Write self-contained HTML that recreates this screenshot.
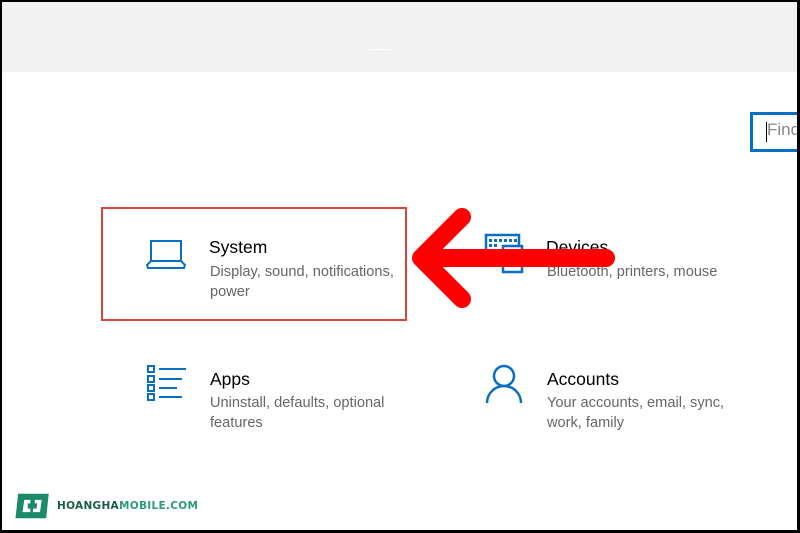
<!DOCTYPE html>
<html><head><meta charset="utf-8"><style>
*{margin:0;padding:0;box-sizing:border-box}
body{width:800px;height:533px;position:relative;overflow:hidden;background:#fff;font-family:"Segoe UI","Liberation Sans",sans-serif}
.frame{position:absolute;left:0;top:0;width:800px;height:533px;border:2px solid #000;border-right-width:3px;border-bottom-width:3px;pointer-events:none}
.top{position:absolute;left:0;top:0;width:800px;height:72px;background:#f2f2f2}
.t{position:absolute;font-size:17.5px;color:#000}
.s{position:absolute;font-size:14.6px;color:#666;line-height:20px}
</style></head><body>
<div class="top"></div>
<div style="position:absolute;left:370px;top:49px;width:20px;height:1px;background:#fff"></div>
<div style="position:absolute;left:750px;top:112px;width:60px;height:40px;border:3px solid #0a6fc2;background:#fff"></div>
<div style="position:absolute;left:766px;top:122px;width:1px;height:20px;background:#000"></div>
<div style="position:absolute;left:767px;top:120px;font-size:17px;color:#888">Find</div>

<div style="position:absolute;left:101px;top:207px;width:306px;height:114px;border:2px solid #d9453f"></div>

<svg style="position:absolute;left:146px;top:240px" width="42" height="30" viewBox="0 0 42 30"><g fill="none" stroke="#0a6fc2" stroke-width="2"><rect x="5" y="1" width="30" height="20"/><path d="M5 21 L1 25 L2 28 H38 L39 25 L35 21"/></g></svg>
<div class="t" style="left:209px;top:237px">System</div>
<div class="s" style="left:210px;top:262px">Display, sound, notifications,<br>power</div>

<svg style="position:absolute;left:484px;top:233px" width="40" height="41" viewBox="0 0 40 41"><g fill="none" stroke="#0a6fc2" stroke-width="2.5"><rect x="2" y="2" width="33" height="23"/><rect x="19" y="13" width="19" height="26" fill="#fff"/><circle cx="28.5" cy="28" r="4.5"/></g><g fill="#0a6fc2"><rect x="5" y="6" width="3" height="3"/><rect x="10" y="6" width="3" height="3"/><rect x="15" y="6" width="3" height="3"/><rect x="20" y="6" width="3" height="3"/><rect x="25" y="6" width="3" height="3"/><rect x="30" y="6" width="3" height="3"/><rect x="5" y="11" width="3" height="3"/><rect x="10" y="11" width="3" height="3"/><rect x="5" y="17" width="11" height="3"/></g></svg>
<div class="t" style="left:546px;top:237px">Devices</div>
<div class="s" style="left:547px;top:262px">Bluetooth, printers, mouse</div>

<svg style="position:absolute;left:146px;top:364px" width="42" height="38" viewBox="0 0 42 38"><g fill="none" stroke="#0a6fc2" stroke-width="2"><rect x="2" y="2" width="6" height="6"/><rect x="2" y="12" width="6" height="6"/><rect x="2" y="21" width="6" height="6"/><rect x="2" y="30" width="6" height="6"/></g><g stroke="#0a6fc2" stroke-width="2"><path d="M13 5H40M13 15H36M13 24H31M13 33H36"/></g></svg>
<div class="t" style="left:210px;top:369px">Apps</div>
<div class="s" style="left:210px;top:393px">Uninstall, defaults, optional<br>features</div>

<svg style="position:absolute;left:484px;top:362px" width="40" height="42" viewBox="0 0 40 42"><g fill="none" stroke="#0a6fc2" stroke-width="2.5"><circle cx="20" cy="14" r="10"/><path d="M3 41 A17 17 0 0 1 37 41"/></g></svg>
<div class="t" style="left:547px;top:369px">Accounts</div>
<div class="s" style="left:547px;top:393px">Your accounts, email, sync,<br>work, family</div>

<svg style="position:absolute;left:0;top:0" width="800" height="533"><g stroke="#f00" stroke-width="18" stroke-linecap="round" stroke-linejoin="round" fill="none"><path d="M606 258H421M462 217L421 258L462 299"/></g></svg>

<svg style="position:absolute;left:13px;top:492px" width="40" height="28" viewBox="0 0 44 32"><path d="M5 2H40L37 30H2Z" fill="#1a8a6a"/><path d="M12 9H19V13H16V19H19V23H10Z M24 9H32L30 23H22V19H26L27 13H24Z" fill="#fff"/></svg>
<div style="position:absolute;left:57px;top:500px;font-family:'DejaVu Sans',sans-serif;font-weight:bold;font-size:10.5px;letter-spacing:0.3px;color:#1a5c4a">HOANGHA<span style="color:#2a9a7a">MOBILE.COM</span></div>
<div class="frame"></div>
</body></html>
